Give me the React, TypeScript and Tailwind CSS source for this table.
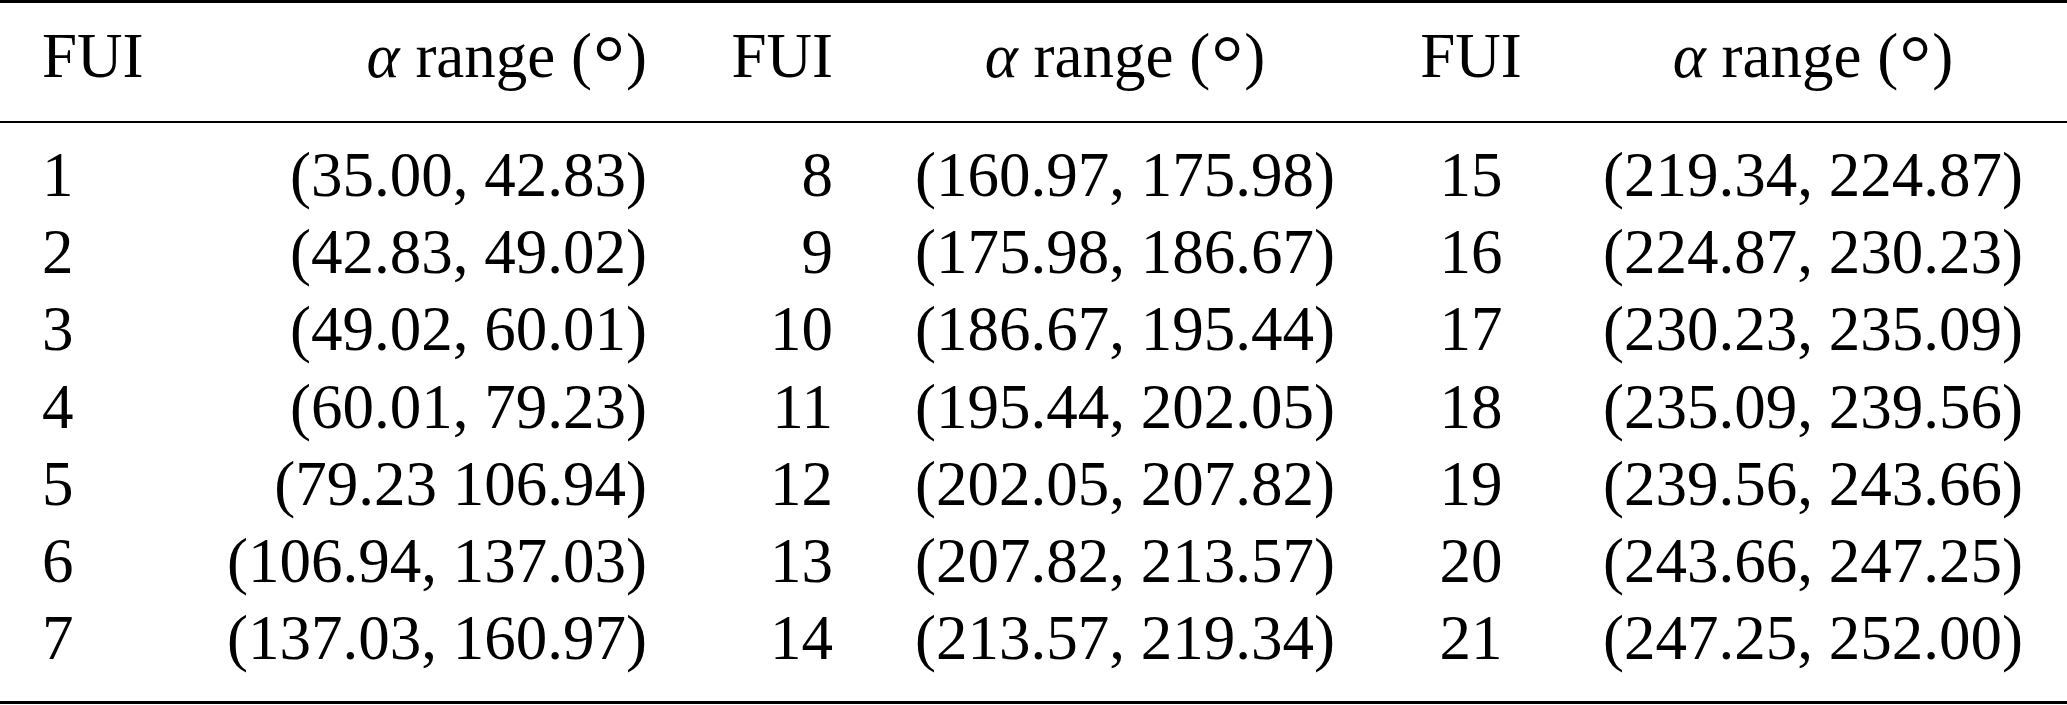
import React from "react";

const rows: string[][] = [
  ["1", "(35.00, 42.83)", "8", "(160.97, 175.98)", "15", "(219.34, 224.87)"],
  ["2", "(42.83, 49.02)", "9", "(175.98, 186.67)", "16", "(224.87, 230.23)"],
  ["3", "(49.02, 60.01)", "10", "(186.67, 195.44)", "17", "(230.23, 235.09)"],
  ["4", "(60.01, 79.23)", "11", "(195.44, 202.05)", "18", "(235.09, 239.56)"],
  ["5", "(79.23 106.94)", "12", "(202.05, 207.82)", "19", "(239.56, 243.66)"],
  ["6", "(106.94, 137.03)", "13", "(207.82, 213.57)", "20", "(243.66, 247.25)"],
  ["7", "(137.03, 160.97)", "14", "(213.57, 219.34)", "21", "(247.25, 252.00)"],
];

const gridCols = "grid grid-cols-[200px_447px_186px_584px_108px_542px]";

function AlphaRange() {
  return (
    <span className="whitespace-nowrap">
      <i>α</i> range (
      <span className="relative top-[13px] text-[80px] leading-[0] px-[1px]">°</span>
      )
    </span>
  );
}

export default function App() {
  return (
    <div
      className="w-[2067px] h-[705px] bg-white text-black text-[63px] overflow-hidden"
      style={{ fontFamily: '"Liberation Serif", "Times New Roman", serif' }}
    >
      <div className="border-t-[3px] border-black" />
      <div className={`${gridCols} h-[118px] leading-[77px] pt-[15px]`}>
        <div className="pl-[42px] text-left">FUI</div>
        <div className="text-right">
          <AlphaRange />
        </div>
        <div className="text-right">FUI</div>
        <div className="text-center">
          <AlphaRange />
        </div>
        <div className="text-center">FUI</div>
        <div className="text-center pl-[34px]">
          <AlphaRange />
        </div>
      </div>
      <div className="border-t-[2px] border-black" />
      <div className="h-[578px] pt-[14px]">
        {rows.map((r, i) => (
          <div key={i} className={`${gridCols} h-[77.2px] leading-[77.2px] whitespace-nowrap`}>
            <div className="pl-[42px] text-left">{r[0]}</div>
            <div className="text-right">{r[1]}</div>
            <div className="text-right">{r[2]}</div>
            <div className="text-center">{r[3]}</div>
            <div className="text-center">{r[4]}</div>
            <div className="text-center pl-[34px]">{r[5]}</div>
          </div>
        ))}
      </div>
      <div className="border-t-[3px] border-black" />
    </div>
  );
}
